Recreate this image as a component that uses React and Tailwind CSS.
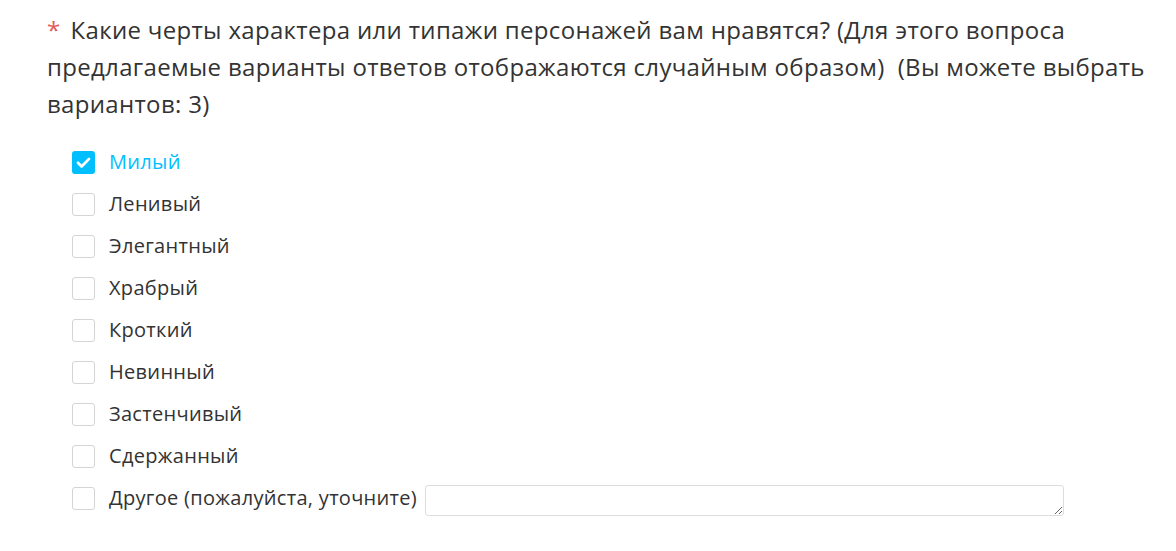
import React, { useState } from 'react';

const options = [
    'Милый',
    'Ленивый',
    'Элегантный',
    'Храбрый',
    'Кроткий',
    'Невинный',
    'Застенчивый',
    'Сдержанный',
];

function Box({ checked }) {
    if (checked) {
        return (
            <span className="w-[23px] h-[23px] rounded-[3px] bg-[#00bfff] flex items-center justify-center shrink-0">
                <svg width="17" height="17" viewBox="0 0 16 16" fill="none">
                    <path d="M2.8 8.3l3.4 3.4L13.2 4.6" stroke="white" strokeWidth="2.6" strokeLinecap="round" strokeLinejoin="round" />
                </svg>
            </span>
        );
    }
    return <span className="w-[23px] h-[23px] rounded-[3px] border border-[#d4d4d4] bg-white shrink-0"></span>;
}

export default function App() {
    const [selected, setSelected] = useState({ 'Милый': true });

    const toggle = (name) => setSelected(prev => ({ ...prev, [name]: !prev[name] }));

    return (
        <div className="min-h-[551px] bg-white text-[#333] font-['Segoe_UI','Open_Sans','Noto_Sans',sans-serif]">
            {/* Question */}
            <div className="pl-[47px] pr-[20px] pt-[11px] w-[1176px]">
                <h2 className="text-[24px] leading-[37px] tracking-[0.32px]">
                    <span className="text-[#e05a5a] mr-[10px]">*</span>
                    Какие черты характера или типажи персонажей вам нравятся? (Для этого вопроса предлагаемые варианты ответов отображаются случайным образом)&nbsp; (Вы можете выбрать вариантов: 3)
                </h2>
            </div>

            {/* Options */}
            <div className="pl-[72px] pt-[19px] flex flex-col">
                {options.map(name => (
                    <label key={name} onClick={() => toggle(name)} className="h-[42px] flex items-center gap-[14px] cursor-pointer">
                        <Box checked={!!selected[name]} />
                        <span className={`text-[20px] tracking-[0.3px] ${selected[name] ? 'text-[#00bfff]' : 'text-[#333]'}`}>{name}</span>
                    </label>
                ))}
                <div className="h-[42px] flex items-center">
                    <Box checked={false} />
                    <span className="text-[20px] tracking-[0.3px] ml-[14px]">Другое (пожалуйста, уточните)</span>
                    <textarea className="ml-[8px] mt-[4px] w-[639px] h-[31px] border border-[#ddd] rounded-[3px] outline-none" />
                </div>
            </div>
        </div>
    );
}
